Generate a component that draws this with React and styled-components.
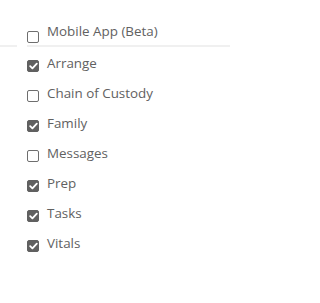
import React from "react";
import styled, { createGlobalStyle } from "styled-components";

const Global = createGlobalStyle`
  html, body { margin: 0; padding: 0; background: #ffffff; }
  body { font-family: "Open Sans", "Liberation Sans", sans-serif; }
`;

const Page = styled.div`
  width: 241px;
  height: 303px;
  padding-top: 18px;
  box-sizing: border-box;
  background: #ffffff;
`;

const List = styled.div`
  display: flex;
  flex-direction: column;
  padding-left: 27px;
`;

const Row = styled.label`
  display: flex;
  align-items: flex-start;
  height: ${(p) => p.$h}px;
  line-height: ${(p) => p.$h}px;
  font-size: 13.4px;
  color: #616161;
  white-space: nowrap;
`;

const Box = styled.span`
  flex: none;
  width: 12px;
  height: 12px;
  box-sizing: border-box;
  margin-top: ${(p) => p.$top}px;
  margin-right: 8px;
  border-radius: 2px;
  border: 1px solid ${(p) => (p.$checked ? "#606060" : "#6e6e6e")};
  background: ${(p) => (p.$checked ? "#606060" : "#ffffff")};
  display: flex;
  align-items: center;
  justify-content: center;
`;

const Divider = styled.div`
  display: flex;
  gap: 10px;
  height: 2px;
  margin-bottom: 1px;
`;

const Seg = styled.div`
  width: ${(p) => p.$w}px;
  height: 2px;
  background: #f0f0f0;
`;

const Check = () => (
  <svg width="9" height="8" viewBox="0 0 9 8">
    <path d="M1.2 4.2 L3.4 6.4 L7.8 1.6" fill="none" stroke="#ffffff" strokeWidth="1.8" strokeLinecap="round" strokeLinejoin="round" />
  </svg>
);

const Item = ({ label, checked, h = 30, top = 12 }) => (
  <Row $h={h}>
    <Box $checked={checked} $top={top}>{checked && <Check />}</Box>
    <span>{label}</span>
  </Row>
);

const items = [
  ["Arrange", true],
  ["Chain of Custody", false],
  ["Family", true],
  ["Messages", false],
  ["Prep", true],
  ["Tasks", true],
  ["Vitals", true],
];

export default function App() {
  return (
    <Page>
      <Global />
      <List>
        <Item label="Mobile App (Beta)" checked={false} h={27} top={13} />
      </List>
      <Divider>
        <Seg $w={17} />
        <Seg $w={203} />
      </Divider>
      <List>
        {items.map(([l, c]) => (
          <Item key={l} label={l} checked={c} />
        ))}
      </List>
    </Page>
  );
}
